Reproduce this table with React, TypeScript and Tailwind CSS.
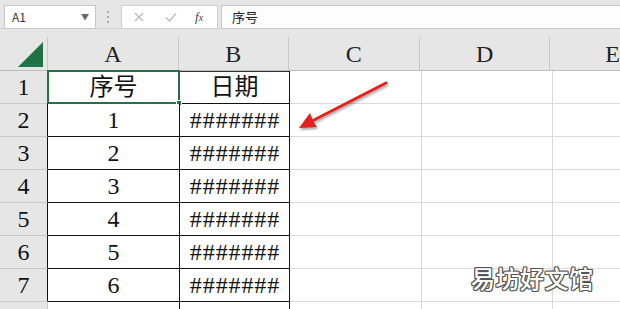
const cols = ['A', 'B', 'C', 'D', 'E']
const colW = ['w-[132px]', 'w-[110px]', 'w-[132px]', 'w-[131px]', 'flex-1']

// row 8 sits at the bottom edge, its number falls below the fold
const rows: [string, string, string][] = [
  ['1', '序号', '日期'],
  ['2', '1', '#######'],
  ['3', '2', '#######'],
  ['4', '3', '#######'],
  ['5', '4', '#######'],
  ['6', '5', '#######'],
  ['7', '6', '#######'],
  ['', '', ''],
]

const cellFont = "font-['Liberation_Serif','Noto_Sans_CJK_SC',serif] text-[24px] text-[#111]"

function Toolbar() {
  return (
    <div className="h-[37px] bg-[#e6e6e6] font-['Noto_Sans_CJK_SC','Liberation_Sans',sans-serif]">
      <div className="flex h-[29px] items-start border-b border-[#d4d4d4] pt-[5px]">
        {/* name box */}
        <div className="ml-[4px] flex h-[24px] w-[92px] items-center justify-between border border-[#c6c6c6] bg-white pl-[7px] pr-[6px]">
          <span className="text-[12px] text-[#333]">A1</span>
          <span className="text-[8px] text-[#666]">▼</span>
        </div>
        <div className="ml-[11px] mt-[6px] flex flex-col gap-[3px]">
          <span className="h-[2px] w-[2px] bg-[#a9a9a9]" />
          <span className="h-[2px] w-[2px] bg-[#a9a9a9]" />
          <span className="h-[2px] w-[2px] bg-[#a9a9a9]" />
        </div>
        {/* cancel / enter / insert function */}
        <div className="ml-[12px] flex h-[24px] w-[97px] items-center border border-[#d0d0d0] bg-white pl-[10px]">
          <svg width="12" height="12" viewBox="0 0 12 12" className="ml-[1px]">
            <path d="M2 2 L10 10 M10 2 L2 10" stroke="#b9b9b9" strokeWidth="1.2" />
          </svg>
          <svg width="14" height="12" viewBox="0 0 14 12" className="ml-[19px]">
            <path d="M2 6.5 L5.5 10 L12 2.5" stroke="#b9b9b9" strokeWidth="1.3" fill="none" />
          </svg>
          <span className="ml-[17px] font-['Liberation_Serif',serif] text-[13px] italic text-[#444]">
            f<span className="text-[10px]">x</span>
          </span>
        </div>
        <div className="ml-[3px] flex h-[24px] flex-1 items-center border-y border-l border-[#c6c6c6] bg-[#fdfdfd] pl-[10px]">
          <span className="text-[13px] text-[#222]">序号</span>
        </div>
      </div>
    </div>
  )
}

function HeaderRow() {
  return (
    <div className="flex h-[34px] border-b border-[#bdbdbd] bg-[#e6e6e6]">
      <div className="flex w-[48px] items-end justify-end border-r border-[#c8c8c8] pb-[2px] pr-[3px]">
        <svg width="26" height="26" viewBox="0 0 26 26">
          <polygon points="25,0 25,25 0,25" fill="#217346" />
        </svg>
      </div>
      {cols.map((c, i) => (
        <div
          key={c}
          className={`${colW[i]} flex items-center justify-center ${i < 4 ? 'border-r border-[#c8c8c8]' : ''} font-['Liberation_Serif',serif] text-[24px] text-[#222] ${i === 4 ? 'justify-start pl-[55px]' : ''}`}
        >
          {c}
        </div>
      ))}
    </div>
  )
}

function Row({ n, a, b, last }: { n: string; a: string; b: string; last: boolean }) {
  const boxed = 'border-r border-b border-[#111]'
  return (
    <div className="flex h-[33px]">
      <div
        className={`flex w-[48px] items-center justify-center border-b border-r bg-[#e6e6e6] ${last ? 'border-[#c8c8c8]' : 'border-b-[#c8c8c8] border-r-[#111]'} ${cellFont}`}
      >
        {n}
      </div>
      <div className={`relative flex w-[132px] items-center justify-center bg-white ${boxed} ${cellFont}`}>
        {a}
        {n === '1' && (
          <div className="absolute -left-[1px] -top-[1px] bottom-[-1px] right-[-1px] border-2 border-[#217346]">
            <span className="absolute -bottom-[4px] -right-[4px] h-[6px] w-[6px] border border-white bg-[#217346]" />
          </div>
        )}
      </div>
      <div
        className={`flex w-[110px] items-center justify-center bg-white ${boxed} ${cellFont} ${b.startsWith('#') ? 'tracking-[0.9px] pl-[1px]' : ''} ${n === '1' ? 'shadow-[inset_0_1px_0_#333]' : ''}`}
      >
        {b}
      </div>
      <div className="w-[132px] border-b border-r border-[#dadada] bg-white" />
      <div className="w-[131px] border-b border-r border-[#dadada] bg-white" />
      <div className="flex-1 border-b border-[#dadada] bg-white" />
    </div>
  )
}

export default function App() {
  return (
    <div className="relative h-[309px] w-[620px] overflow-hidden bg-white">
      <Toolbar />
      <HeaderRow />
      {rows.map(([n, a, b], i) => (
        <Row key={i} n={n} a={a} b={b} last={i === rows.length - 1} />
      ))}

      {/* red pointer arrow */}
      <svg
        className="pointer-events-none absolute left-0 top-0 drop-shadow-[1px_2px_1px_rgba(0,0,0,0.35)]"
        width="620"
        height="309"
        viewBox="0 0 620 309"
      >
        <path d="M386 83 L312 121" stroke="#e3201c" strokeWidth="3" strokeLinecap="round" />
        <polygon points="299,128 317,127 313,121 310,113" fill="#e3201c" />
      </svg>

      {/* site watermark */}
      <div className="absolute left-[471px] top-[260px] font-['Noto_Sans_CJK_SC',sans-serif] text-[24px] font-medium tracking-[0.5px] text-white [text-shadow:1px_0_0_#555,-1px_0_0_#555,0_1px_0_#555,0_-1px_0_#555,1px_1px_0_#555,-1px_-1px_0_#555,1px_-1px_0_#555,-1px_1px_0_#555]">
        易坊好文馆
      </div>
    </div>
  )
}
